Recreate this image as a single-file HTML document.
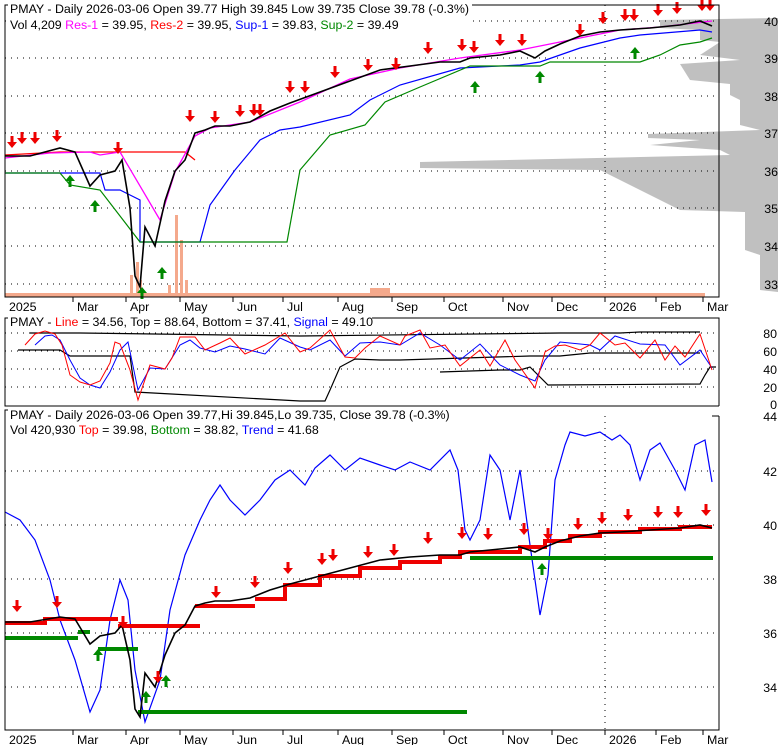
<!DOCTYPE html>
<html><head><meta charset="utf-8"><style>
body{margin:0;background:#fff;width:780px;height:745px;overflow:hidden}
svg{display:block}
text{font-family:"Liberation Sans",sans-serif;font-size:12.4px}
</style></head><body>
<svg width="780" height="745" viewBox="0 0 780 745" xmlns="http://www.w3.org/2000/svg">
<defs>
<g id="dn"><rect x="-1.5" y="-9" width="3" height="6" fill="#e00"/><polygon points="-5,-3 5,-3 0,3" fill="#e00"/></g>
<g id="up"><rect x="-1.5" y="3" width="3" height="6" fill="#080"/><polygon points="-5,3 5,3 0,-3" fill="#080"/></g>
</defs>
<polygon fill="#c0c0c0" points="778,18 660,20 660,28 700,30 700,40 720,42 700,55 740,60 680,64 690,80 730,84 730,95 740,100 740,125 760,130 648,134 648,138 700,140 650,145 720,150 730,155 420,162 420,168 600,170 620,180 640,190 660,200 680,210 745,212 745,250 760,255 760,290 778,292"/>
<g stroke="#000" stroke-dasharray="1,5" stroke-width="1">
<line x1="5" y1="21" x2="719" y2="21"/><line x1="5" y1="58" x2="719" y2="58"/><line x1="5" y1="96" x2="719" y2="96"/><line x1="5" y1="133" x2="719" y2="133"/><line x1="5" y1="171" x2="719" y2="171"/><line x1="5" y1="208" x2="719" y2="208"/><line x1="5" y1="246" x2="719" y2="246"/><line x1="5" y1="284" x2="719" y2="284"/>
<line x1="605" y1="5" x2="605" y2="297"/>
</g>
<g fill="#f4a98c">
<rect x="5" y="293" width="700" height="4"/>
<rect x="130" y="275" width="3" height="22"/><rect x="136" y="262" width="3" height="35"/><rect x="140" y="280" width="2" height="17"/>
<rect x="175" y="215" width="3" height="82"/><rect x="180" y="240" width="3" height="57"/><rect x="185" y="280" width="3" height="17"/><rect x="168" y="285" width="3" height="12"/>
<rect x="370" y="288" width="20" height="9"/>
</g>
<polyline fill="none" stroke="#f00" stroke-width="1.3" points="5,155 60,152 185,152 195,160"/>
<polyline fill="none" stroke="#f0f" stroke-width="1.3" points="5,158 50,153 90,152 100,155 120,152 160,220 175,172 195,136 210,128 250,122 300,102 350,79 400,68 460,58 520,50 580,38 620,30 660,27 712,21"/>
<polyline fill="none" stroke="#00f" stroke-width="1.2" points="5,173 100,173 105,190 120,190 140,200 140,242 200,242 210,205 235,170 260,140 280,130 300,127 350,115 370,100 400,85 460,68 520,65 540,62 580,48 620,38 640,35 700,30 712,32"/>
<polyline fill="none" stroke="#080" stroke-width="1.2" points="5,173 60,173 70,185 100,190 140,242 287,242 300,170 330,135 365,125 385,102 420,87 470,66 540,66 550,62 640,62 660,55 680,45 700,42 712,38"/>
<polyline fill="none" stroke="#000" stroke-width="1.6" points="5,156 30,156 60,148 75,152 90,186 100,175 115,171 122,160 130,208 135,276 140,287 145,227 155,246 165,201 175,171 185,160 195,133 205,130 215,126 230,126 250,122 270,111 290,103 320,92 350,81 380,70 410,66 440,62 460,62 470,58 500,55 520,51 535,58 545,51 560,44 580,36 600,32 620,30 650,28 680,25 700,21 712,26"/>
<g>
<use href="#dn" x="12" y="145"/><use href="#dn" x="22" y="141"/><use href="#dn" x="35" y="141"/><use href="#dn" x="57" y="139"/><use href="#dn" x="118" y="151"/>
<use href="#dn" x="190" y="119"/><use href="#dn" x="215" y="120"/><use href="#dn" x="240" y="114"/><use href="#dn" x="254" y="113"/><use href="#dn" x="260" y="113"/><use href="#dn" x="290" y="90"/><use href="#dn" x="305" y="90"/><use href="#dn" x="335" y="75"/><use href="#dn" x="368" y="68"/><use href="#dn" x="396" y="67"/><use href="#dn" x="428" y="51"/><use href="#dn" x="462" y="48"/><use href="#dn" x="474" y="50"/><use href="#dn" x="500" y="43"/><use href="#dn" x="522" y="43"/><use href="#dn" x="580" y="33"/><use href="#dn" x="603" y="21"/><use href="#dn" x="625" y="18"/><use href="#dn" x="634" y="18"/><use href="#dn" x="658" y="13"/><use href="#dn" x="677" y="11"/><use href="#dn" x="702" y="8"/><use href="#dn" x="710" y="8"/>
<use href="#up" x="70" y="178"/><use href="#up" x="95" y="203"/><use href="#up" x="142" y="290"/><use href="#up" x="162" y="270"/><use href="#up" x="475" y="84"/><use href="#up" x="540" y="74"/><use href="#up" x="635" y="50"/>
</g>
<polyline fill="none" stroke="#000" points="472,5 719,5 719,297 5,297 5,5 8,5"/>
<rect x="8" y="0" width="462" height="34" fill="#fff"/>
<text x="10" y="13">PMAY - Daily 2026-03-06 Open 39.77  High 39.845  Low 39.735  Close 39.78 (-0.3%)</text>
<text x="10" y="29">Vol 4,209 <tspan fill="#f0f">Res-1</tspan> = 39.95, <tspan fill="#f00">Res-2</tspan> = 39.95, <tspan fill="#00f">Sup-1</tspan> = 39.83, <tspan fill="#080">Sup-2</tspan> = 39.49</text>
<g text-anchor="end">
<text x="778" y="26">40</text><text x="778" y="63">39</text><text x="778" y="101">38</text><text x="778" y="138">37</text><text x="778" y="176">36</text><text x="778" y="213">35</text><text x="778" y="251">34</text><text x="778" y="289">33</text>
</g>
<g stroke="#000"><line x1="73" y1="297" x2="73" y2="302"/><line x1="126" y1="297" x2="126" y2="302"/><line x1="180" y1="297" x2="180" y2="302"/><line x1="233" y1="297" x2="233" y2="302"/><line x1="283" y1="297" x2="283" y2="302"/><line x1="338" y1="297" x2="338" y2="302"/><line x1="392" y1="297" x2="392" y2="302"/><line x1="444" y1="297" x2="444" y2="302"/><line x1="503" y1="297" x2="503" y2="302"/><line x1="552" y1="297" x2="552" y2="302"/><line x1="605" y1="297" x2="605" y2="302"/><line x1="656" y1="297" x2="656" y2="302"/><line x1="703" y1="297" x2="703" y2="302"/></g>
<g><text x="9" y="311">2025</text><text x="77" y="311">Mar</text><text x="130" y="311">Apr</text><text x="184" y="311">May</text><text x="237" y="311">Jun</text><text x="287" y="311">Jul</text><text x="342" y="311">Aug</text><text x="396" y="311">Sep</text><text x="448" y="311">Oct</text><text x="507" y="311">Nov</text><text x="556" y="311">Dec</text><text x="609" y="311">2026</text><text x="660" y="311">Feb</text><text x="707" y="311">Mar</text></g>

<g stroke="#000" stroke-dasharray="1,5"><line x1="5" y1="333" x2="719" y2="333"/><line x1="5" y1="351" x2="719" y2="351"/><line x1="5" y1="369" x2="719" y2="369"/><line x1="5" y1="387" x2="719" y2="387"/></g>
<polyline fill="none" stroke="#000" stroke-width="1.2" points="30,333 80,333 300,336 560,333 620,333 640,332 700,332"/>
<polyline fill="none" stroke="#000" stroke-width="1.2" points="18,350 60,350 70,356 130,356 135,392 300,401 325,401 330,390 340,367 355,359 380,360 400,360 530,356 560,356 590,353 620,353 700,353"/>
<polyline fill="none" stroke="#000" stroke-width="1.2" points="440,372 500,370 520,370 530,367 548,385 700,384 705,375 710,367 716,367"/>
<polyline fill="none" stroke="#00f" stroke-width="1" points="35,345 45,336 52,335 60,340 70,360 80,378 90,385 100,388 110,372 120,350 128,342 138,390 150,368 165,369 180,345 190,340 200,348 215,352 230,346 245,349 265,354 280,338 300,347 310,350 330,340 345,356 360,343 380,342 400,345 420,333 440,345 460,360 480,344 500,365 520,375 535,381 545,360 560,342 590,345 600,350 615,336 640,344 665,345 680,365 700,350 712,368"/>
<polyline fill="none" stroke="#f00" stroke-width="1" points="25,345 35,334 45,331 55,334 62,345 70,375 80,382 90,385 100,381 110,363 115,342 120,344 130,370 138,400 150,365 165,369 172,358 180,337 195,337 205,350 220,343 230,338 245,354 265,345 285,333 300,352 310,348 330,330 345,357 355,358 365,348 380,336 400,345 405,336 420,330 430,348 445,345 460,366 480,350 490,366 505,340 515,360 535,388 545,352 555,346 565,345 580,350 590,345 600,333 615,345 625,343 640,358 655,340 665,360 675,346 685,357 700,334 712,370"/>
<polyline fill="none" stroke="#000" points="719,406 5,406 5,318 8,318"/>
<polyline fill="none" stroke="#000" points="372,318 719,318 719,406"/>
<text x="10" y="326">PMAY - <tspan fill="#f00">Line</tspan> = 34.56, Top = 88.64, Bottom = 37.41, <tspan fill="#00f">Signal</tspan> = 49.10</text>
<g text-anchor="end"><text x="777" y="338">80</text><text x="777" y="356">60</text><text x="777" y="374">40</text><text x="777" y="392">20</text><text x="777" y="409">0</text></g>

<g stroke="#000" stroke-dasharray="1,5"><line x1="5" y1="471" x2="719" y2="471"/><line x1="5" y1="525" x2="719" y2="525"/><line x1="5" y1="579" x2="719" y2="579"/><line x1="5" y1="633" x2="719" y2="633"/><line x1="5" y1="687" x2="719" y2="687"/><line x1="605" y1="416" x2="605" y2="730"/></g>
<polyline fill="none" stroke="#00f" stroke-width="1.2" points="5,512 20,520 35,540 50,580 60,620 75,660 90,712 100,690 110,620 120,580 128,600 135,670 145,722 160,680 170,610 185,555 200,520 210,500 220,485 230,500 245,515 260,500 275,480 290,470 305,485 315,468 330,455 345,470 360,458 380,465 395,470 410,462 430,470 450,450 458,470 465,530 470,540 480,520 490,455 500,470 510,520 520,470 530,545 540,615 548,575 555,480 565,445 570,432 585,436 600,432 612,440 620,435 630,445 640,480 650,450 660,443 675,470 685,490 695,445 705,440 712,482"/>
<g stroke-width="4" fill="none">
<polyline stroke="#080" points="5,638 78,638"/><polyline stroke="#080" points="78,632 90,632"/><polyline stroke="#080" points="98,649 138,649"/><polyline stroke="#080" points="138,712 467,712"/><polyline stroke="#080" points="470,558 713,558"/>
<polyline stroke="#e00" points="5,623 45,623 45,619 118,619"/><polyline stroke="#e00" points="118,626 200,626"/><polyline stroke="#e00" points="195,606 255,606"/><polyline stroke="#e00" points="255,599 285,599 285,585 320,585 320,576 360,576 360,568 400,568 400,562 440,562 440,557 460,557 460,552 520,552 520,547 545,547 545,541 570,541 570,536 600,536 600,532 640,532 640,529 680,529 680,527 712,527"/>
</g>
<polyline fill="none" stroke="#000" stroke-width="1.6" points="5,622 30,622 60,617 75,619 90,644 100,636 115,633 122,625 130,660 135,709 140,717 145,673 155,687 165,655 175,633 185,625 195,606 205,603 215,601 230,601 250,598 270,590 290,584 320,576 350,568 380,560 410,557 440,555 460,555 470,552 500,549 520,547 535,552 545,547 560,541 580,536 600,533 620,532 650,530 680,528 700,525 712,528"/>
<g>
<use href="#dn" x="17" y="609"/><use href="#dn" x="57" y="605"/><use href="#dn" x="123" y="625"/><use href="#dn" x="158" y="680"/><use href="#dn" x="216" y="595"/><use href="#dn" x="255" y="585"/><use href="#dn" x="288" y="571"/><use href="#dn" x="322" y="562"/><use href="#dn" x="333" y="558"/><use href="#dn" x="368" y="555"/><use href="#dn" x="394" y="553"/><use href="#dn" x="428" y="541"/><use href="#dn" x="462" y="536"/><use href="#dn" x="488" y="537"/><use href="#dn" x="524" y="532"/><use href="#dn" x="548" y="537"/><use href="#dn" x="578" y="527"/><use href="#dn" x="602" y="521"/><use href="#dn" x="628" y="518"/><use href="#dn" x="658" y="515"/><use href="#dn" x="678" y="515"/><use href="#dn" x="706" y="513"/>
<use href="#up" x="98" y="652"/><use href="#up" x="146" y="694"/><use href="#up" x="166" y="678"/><use href="#up" x="542" y="566"/>
</g>
<polyline fill="none" stroke="#000" points="719,416 719,730 5,730 5,410 8,410"/>
<polyline fill="none" stroke="#000" points="712,416 719,416"/>
<text x="10" y="419">PMAY - Daily 2026-03-06 Open 39.77,Hi 39.845,Lo 39.735, Close 39.78 (-0.3%)</text>
<text x="10" y="434">Vol 420,930 <tspan fill="#f00">Top</tspan> = 39.98, <tspan fill="#080">Bottom</tspan> = 38.82, <tspan fill="#00f">Trend</tspan> = 41.68</text>
<g text-anchor="end"><text x="777" y="421">44</text><text x="777" y="476">42</text><text x="777" y="530">40</text><text x="777" y="584">38</text><text x="777" y="638">36</text><text x="777" y="692">34</text></g>
<g stroke="#000"><line x1="73" y1="730" x2="73" y2="735"/><line x1="126" y1="730" x2="126" y2="735"/><line x1="180" y1="730" x2="180" y2="735"/><line x1="233" y1="730" x2="233" y2="735"/><line x1="283" y1="730" x2="283" y2="735"/><line x1="338" y1="730" x2="338" y2="735"/><line x1="392" y1="730" x2="392" y2="735"/><line x1="444" y1="730" x2="444" y2="735"/><line x1="503" y1="730" x2="503" y2="735"/><line x1="552" y1="730" x2="552" y2="735"/><line x1="605" y1="730" x2="605" y2="735"/><line x1="656" y1="730" x2="656" y2="735"/><line x1="703" y1="730" x2="703" y2="735"/></g>
<g><text x="9" y="744">2025</text><text x="77" y="744">Mar</text><text x="130" y="744">Apr</text><text x="184" y="744">May</text><text x="237" y="744">Jun</text><text x="287" y="744">Jul</text><text x="342" y="744">Aug</text><text x="396" y="744">Sep</text><text x="448" y="744">Oct</text><text x="507" y="744">Nov</text><text x="556" y="744">Dec</text><text x="609" y="744">2026</text><text x="660" y="744">Feb</text><text x="707" y="744">Mar</text></g>
</svg>
</body></html>
